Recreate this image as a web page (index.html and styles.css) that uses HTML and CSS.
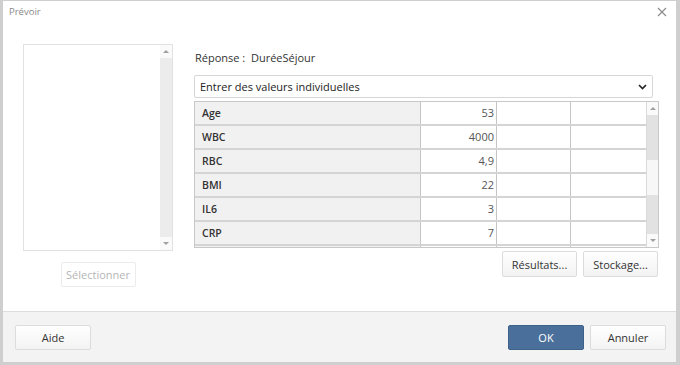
FILE: index.html
```html
<!DOCTYPE html>
<html>
<head>
<meta charset="utf-8">
<link rel="stylesheet" href="styles.css">
</head>
<body>
<div class="dialog">
  <div class="titlebar">
    <span class="title">Prévoir</span>
    <svg class="close" width="10" height="10" viewBox="0 0 10 10"><path d="M1 1L9 9M9 1L1 9" stroke="#8a8a8a" stroke-width="1.1"/></svg>
  </div>
  <div class="content">
    <div class="leftcol">
      <div class="listbox">
        <div class="listarea"></div>
        <div class="vscroll">
          <div class="arrow up"></div>
          <div class="track"></div>
          <div class="arrow down"></div>
        </div>
      </div>
      <button class="btn disabled select-btn">Sélectionner</button>
    </div>
    <div class="rightcol">
      <div class="response">Réponse :&nbsp;&nbsp;DuréeSéjour</div>
      <div class="dropdown">
        <span>Entrer des valeurs individuelles</span>
        <svg width="9" height="6" viewBox="0 0 9 6"><path d="M1 1L4.5 4.5L8 1" stroke="#222" stroke-width="1.6" fill="none"/></svg>
      </div>
      <div class="grid">
        <div class="rows">
          <div class="row"><div class="cell label">Age</div><div class="cell val">53</div><div class="cell"></div><div class="cell"></div></div>
          <div class="row"><div class="cell label">WBC</div><div class="cell val">4000</div><div class="cell"></div><div class="cell"></div></div>
          <div class="row"><div class="cell label">RBC</div><div class="cell val">4,9</div><div class="cell"></div><div class="cell"></div></div>
          <div class="row"><div class="cell label">BMI</div><div class="cell val">22</div><div class="cell"></div><div class="cell"></div></div>
          <div class="row"><div class="cell label">IL6</div><div class="cell val">3</div><div class="cell"></div><div class="cell"></div></div>
          <div class="row"><div class="cell label">CRP</div><div class="cell val">7</div><div class="cell"></div><div class="cell"></div></div>
          <div class="row partial"><div class="cell label"></div><div class="cell val"></div><div class="cell"></div><div class="cell"></div></div>
        </div>
        <div class="vscroll gridscroll">
          <div class="arrow up"></div>
          <div class="track t1"></div>
          <div class="thumb"></div>
          <div class="track t2"></div>
          <div class="arrow down"></div>
        </div>
      </div>
      <div class="actions">
        <button class="btn">Résultats...</button>
        <button class="btn">Stockage...</button>
      </div>
    </div>
  </div>
  <div class="footer">
    <button class="btn">Aide</button>
    <div class="footer-right">
      <button class="btn primary">OK</button>
      <button class="btn">Annuler</button>
    </div>
  </div>
</div>
</body>
</html>
```
FILE: styles.css
```css
html, body {
  margin: 0;
  padding: 0;
  background: #cfcfcf;
  width: 680px;
  height: 365px;
  overflow: hidden;
  font-family: "Open Sans", "Noto Sans", sans-serif;
  font-size: 11px;
  color: #333;
}
.dialog {
  margin: 1px 0 0 3px;
  width: 673px;
  height: 361px;
  background: #fff;
  display: flex;
  flex-direction: column;
}
.titlebar {
  height: 22px;
  display: flex;
  align-items: center;
  justify-content: space-between;
  padding: 0 9px 0 6px;
}
.title {
  font-size: 9.5px;
  color: #8a8a8a;
  margin-top: -2px;
}
.close { margin-top: 0px; }
.content {
  flex: 1;
  display: flex;
  padding: 21px 0 0 20px;
}
.leftcol {
  width: 150px;
  display: flex;
  flex-direction: column;
  align-items: center;
}
.listbox {
  width: 148px;
  height: 205px;
  border: 1px solid #e2e2e2;
  display: flex;
}
.listarea { flex: 1; }
.vscroll {
  width: 12px;
  display: flex;
  flex-direction: column;
  background: #ececec;
}
.arrow {
  height: 13px;
  background: #fafafa;
  position: relative;
}
.arrow::after {
  content: "";
  position: absolute;
  left: 3px;
  border-left: 3px solid transparent;
  border-right: 3px solid transparent;
}
.arrow.up::after { top: 5px; border-bottom: 3px solid #a0a0a0; }
.arrow.down::after { top: 5px; border-top: 3px solid #a0a0a0; }
.track { flex: 1; }
.select-btn { margin-top: 11px; width: 76px; height: 24px; }
.btn {
  font-family: inherit;
  font-size: 11px;
  color: #333;
  width: 75px;
  height: 25px;
  border: 1px solid #dcdcdc;
  border-radius: 2px;
  background: linear-gradient(#ffffff, #f3f3f3);
  padding: 0;
}
.btn.disabled { color: #b5b5b5; border-color: #ececec; background: #fff; }
.btn.primary {
  background: #4a6f9a;
  border-color: #3e6189;
  color: #fff;
}
.rightcol {
  margin-left: 21px;
  width: 465px;
  display: flex;
  flex-direction: column;
}
.response {
  height: 18px;
  line-height: 18px;
  margin-top: 5px;
  padding-left: 1px;
}
.dropdown {
  margin-top: 8px;
  width: 447px;
  height: 21px;
  border: 1px solid #d6d6d6;
  border-radius: 2px;
  display: flex;
  align-items: center;
  justify-content: space-between;
  padding: 0 5px 0 5px;
  color: #222;
}
.grid {
  margin-top: 3px;
  width: 463px;
  height: 145px;
  border: 1px solid #c8c8c8;
  display: flex;
  overflow: hidden;
}
.rows { flex: 1; }
.row {
  display: flex;
  height: 22px;
  border-bottom: 2px solid #d4d4d4;
}
.cell {
  width: 74px;
  border-right: 1px solid #c4c4c4;
  line-height: 22px;
  padding: 0 2px;
  box-sizing: border-box;
}
.cell:last-child { border-right: none; width: 75px; }
.cell.label {
  width: 226px;
  background: #f1f1f1;
  padding-left: 7px;
  color: #333;
  font-weight: 600;
  font-size: 10.5px;
}
.cell.val { width: 76px; text-align: right; color: #555; }
.gridscroll { width: 13px; border-left: 1px solid #dadada; }
.gridscroll .t1 { background: #e2e2e2; flex: none; height: 45px; }
.gridscroll .thumb { height: 35px; background: #f7f7f7; }
.gridscroll .t2 { background: #e2e2e2; }
.actions {
  margin-top: 3px;
  display: flex;
  justify-content: flex-end;
  gap: 6px;
  padding-right: 1px;
}
.actions .btn { height: 26px; }
.footer {
  height: 50px;
  border-top: 1px solid #dcdcdc;
  background: #f3f3f3;
  display: flex;
  align-items: center;
  justify-content: space-between;
  padding: 0 10px 0 12px;
  margin-top: 0;
}
.footer .btn { width: 76px; height: 25px; }
.footer-right { display: flex; gap: 6px; }
```
